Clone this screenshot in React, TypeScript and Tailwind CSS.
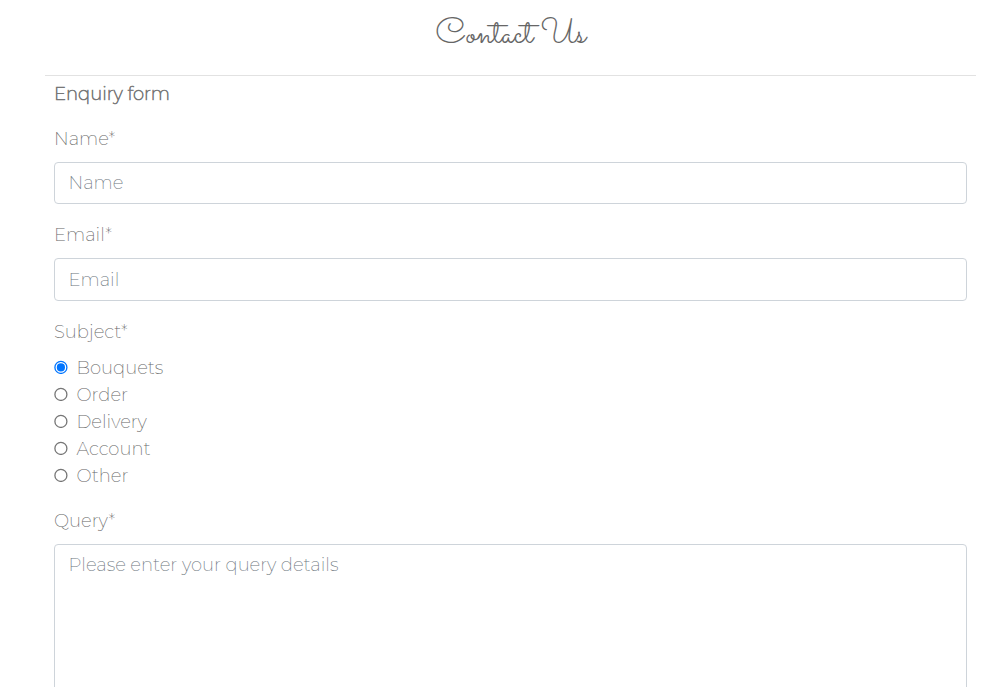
import React from "react";

const subjects = ["Bouquets", "Order", "Delivery", "Account", "Other"];

const field =
  "block w-full rounded border border-[#ced4da] bg-white px-[13.5px] font-extralight text-[#6c757d] placeholder:text-[#6c757d] placeholder:opacity-100 outline-none";

export default function App() {
  return (
    <main className="h-[687px] overflow-hidden bg-white pl-[45px] pr-4 font-[Montserrat,Lato,sans-serif] text-[18px] font-extralight leading-[27px] text-[#666]">
      <header className="flex h-[76px] justify-center border-b border-[#e2e2e2] pt-[14px]">
        <h1 className="whitespace-nowrap font-[Sacramento,cursive] text-[36px] font-normal leading-[43px] text-[#666]">Contact Us</h1>
      </header>
      <form className="px-[9px] pt-[5px]">
        <h2 className="font-extralight text-[#777] [-webkit-text-stroke:0.6px_#777]">Enquiry form</h2>
        <label htmlFor="name" className="mt-[18px] block">Name*</label>
        <input id="name" placeholder="Name" className={field + " mt-[9px] h-[42px]"} />
        <label htmlFor="email" className="mt-[18px] block">Email*</label>
        <input id="email" placeholder="Email" className={field + " mt-[9px] h-[43px]"} />
        <p className="mt-[18px]">Subject*</p>
        <div className="mt-[9px]">
          {subjects.map((s, i) => (
            <label key={s} className="flex h-[27px] items-start gap-[8.5px]">
              <input
                type="radio"
                name="subject"
                defaultChecked={i === 0}
                className="peer sr-only"
              />
              <svg viewBox="0 0 14 14" className="mt-[5px] size-[14px] shrink-0 fill-none stroke-[#767676] peer-checked:fill-[#0075ff] peer-checked:stroke-[#0075ff]">
                <circle cx="6.9" cy="7.4" r="6" fill="none" strokeWidth="1.3" />
                {i === 0 && <circle cx="6.9" cy="7.4" r="4.1" stroke="none" />}
              </svg>
              <span>{s}</span>
            </label>
          ))}
        </div>
        <label htmlFor="query" className="mt-[18px] block">Query*</label>
        <textarea id="query" placeholder="Please enter your query details" className={field + " mt-[9px] h-[200px] resize-none pt-[7px]"} />
      </form>
    </main>
  );
}
